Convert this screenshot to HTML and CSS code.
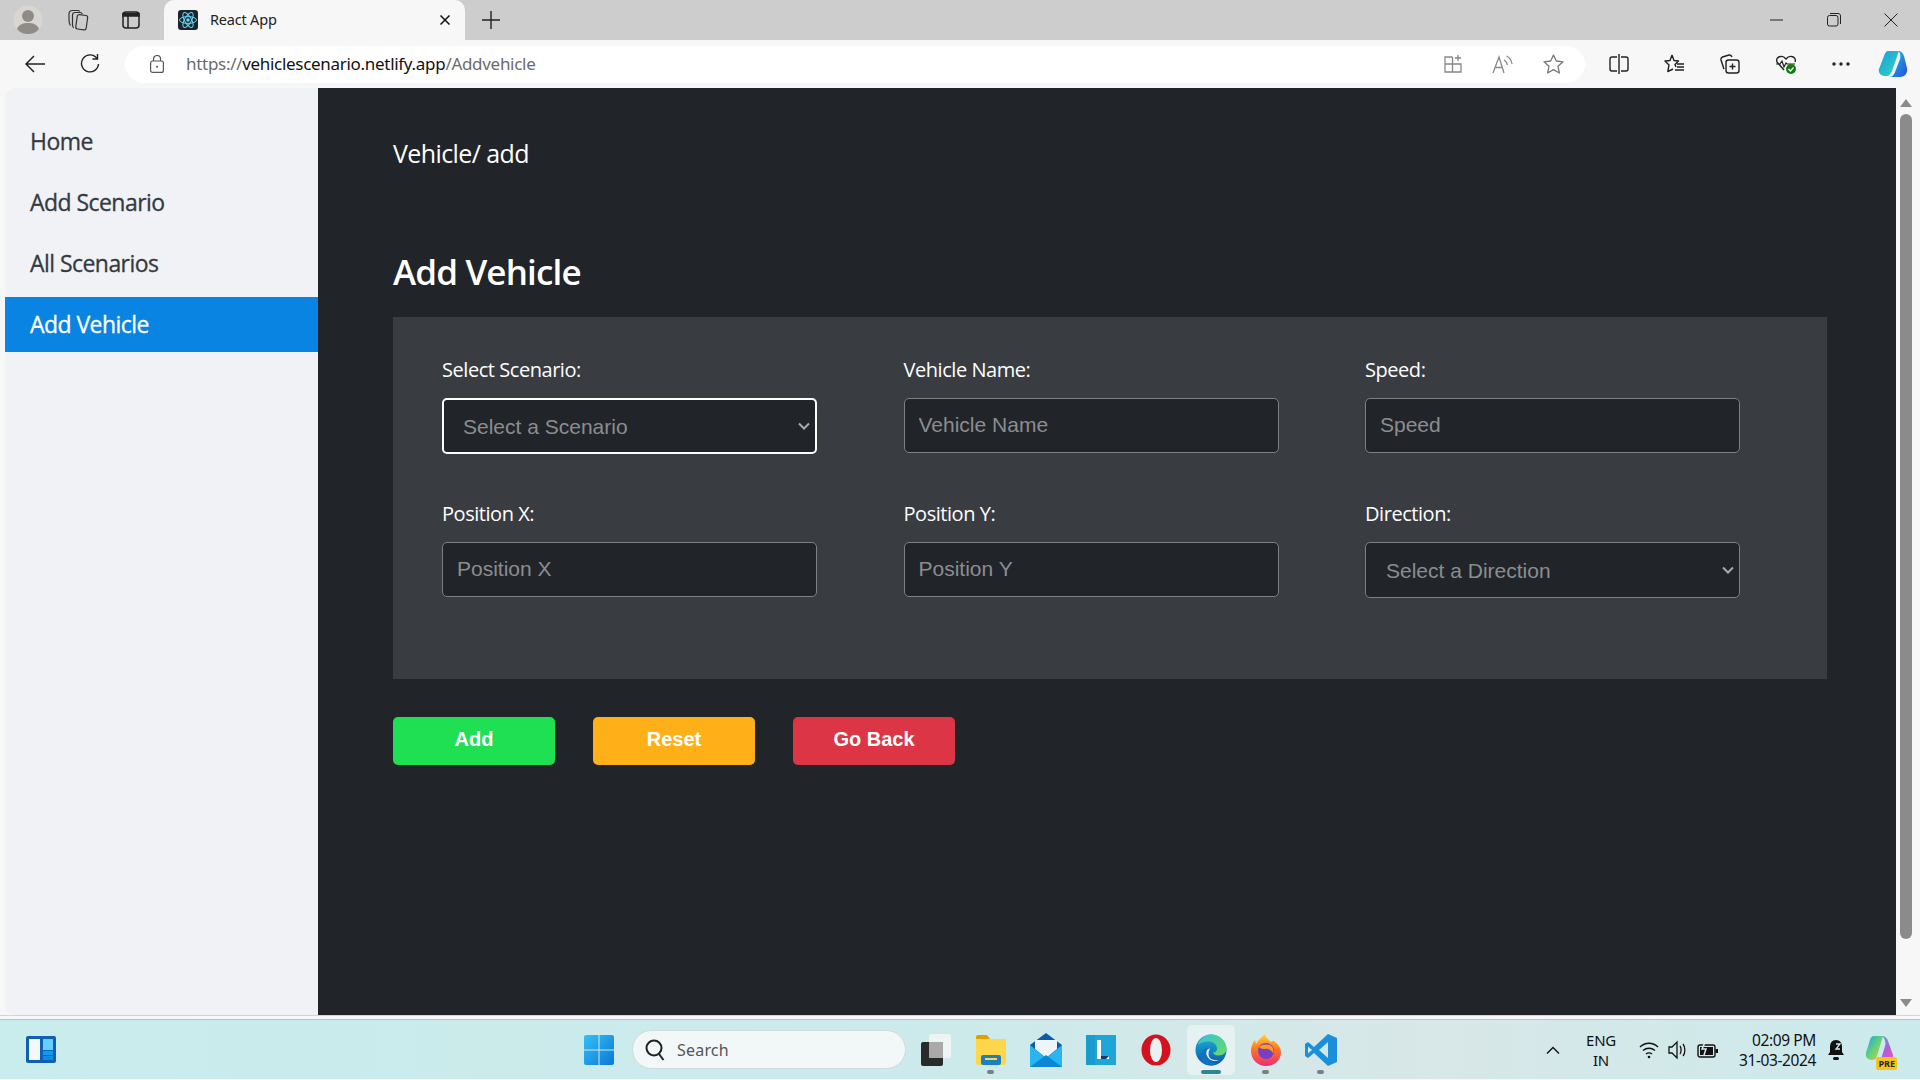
FILE: index.html
```html
<!DOCTYPE html>
<html>
  <head>
    <title>React App</title>
    <link rel="stylesheet" href="styles.css">
  </head>
  <body>
    <!-- browser tab strip -->
    <div class="tabstrip">
      <div class="avatar">
        <svg width="30" height="32" viewBox="0 0 30 32"><circle cx="15" cy="16" r="14.5" fill="#d8d6d2"/><circle cx="15" cy="12" r="6" fill="#8f8c87"/><path d="M4 25c2-5 6-6 11-6s9 1 11 6c-3 4-7 5-11 5s-8-1-11-5z" fill="#8f8c87"/></svg>
      </div>
      <div class="strip-icon">
        <svg width="22" height="22" viewBox="0 0 22 22" fill="none" stroke="#333" stroke-width="1.2"><rect x="9.500" y="6" width="10.500" height="14.500" rx="2" transform="rotate(8 14.700 13)"/><path d="M6.500 19C5 17 5.500 15 5.500 13V6c0-1.500 1-2.500 2.500-2.500h5c1.300 0 2 .7 2.300 1.700"/><path d="M3.500 16.500C1.800 14.500 2 12 2 10V5c0-2 1.500-3.500 3.500-3.500h5c1 0 1.800.3 2.300 1"/></svg>
      </div>
      <div class="strip-icon">
        <svg width="18" height="18" viewBox="0 0 18 18" fill="none" stroke="#222" stroke-width="1.5"><rect x="1" y="1" width="16" height="16" rx="3"/><path d="M1 2.5h16V5H1z" fill="#222"/><path d="M6 5v12"/></svg>
      </div>
      <div class="tab">
        <svg class="favicon" width="20" height="20" viewBox="0 0 20 20"><rect width="20" height="20" rx="3" fill="#20232a"/><g fill="none" stroke="#61dafb" stroke-width="1"><ellipse cx="10" cy="10" rx="8.5" ry="3.4"/><ellipse cx="10" cy="10" rx="8.5" ry="3.4" transform="rotate(60 10 10)"/><ellipse cx="10" cy="10" rx="8.5" ry="3.4" transform="rotate(120 10 10)"/></g><circle cx="10" cy="10" r="1.7" fill="#61dafb"/></svg>
        <span class="tab-title">React App</span>
        <svg class="tab-close" width="12" height="12" viewBox="0 0 12 12" stroke="#111" stroke-width="1.5"><path d="M1.5 1.5l9 9M10.5 1.5l-9 9"/></svg>
      </div>
      <svg class="new-tab" width="18" height="18" viewBox="0 0 18 18" stroke="#222" stroke-width="1.4"><path d="M9 0v18M0 9h18"/></svg>
      <div class="window-btns">
        <svg width="14" height="14" viewBox="0 0 14 14" stroke="#222" stroke-width="1"><path d="M0 7h13"/></svg>
        <svg width="14" height="14" viewBox="0 0 14 14" fill="none" stroke="#222" stroke-width="1"><rect x=".5" y="2.5" width="10.5" height="10.5" rx="2"/><path d="M3 .5h8c1.500 0 2.500 1 2.500 2.500v8"/></svg>
        <svg width="14" height="14" viewBox="0 0 14 14" stroke="#222" stroke-width="1"><path d="M.5.5l13 13M13.500.5l-13 13"/></svg>
      </div>
    </div>

    <!-- address bar -->
    <div class="toolbar">
      <svg class="nav-back" width="20" height="18" viewBox="0 0 20 18" fill="none" stroke="#222" stroke-width="1.5"><path d="M20 9H1M9 1L1 9l8 8"/></svg>
      <svg class="nav-reload" width="20" height="20" viewBox="0 0 20 20" fill="none" stroke="#222" stroke-width="1.4"><path d="M17 4.500A8.500 8.500 0 1 0 18.500 10"/><path d="M17.500 0v5h-5"/></svg>
      <div class="addressbar">
        <svg class="lock" width="14" height="18" viewBox="0 0 14 18" fill="none" stroke="#555" stroke-width="1.2"><rect x=".6" y="6" width="12.800" height="11.400" rx="2"/><path d="M3.500 6V4a3.500 3.500 0 0 1 7 0v2"/><circle cx="7" cy="11.700" r="1" fill="#555" stroke="none"/></svg>
        <span class="url"><span class="url-dim">https://</span>vehiclescenario.netlify.app<span class="url-dim">/Addvehicle</span></span>
        <div class="address-icons">
          <svg width="20" height="20" viewBox="0 0 20 20" fill="none" stroke="#888" stroke-width="1.3"><path d="M9.500 3H2v15h16v-8H2M9.500 3v15"/><path d="M15 1v6M12 4h6"/></svg>
          <svg width="22" height="20" viewBox="0 0 22 20" fill="none" stroke="#888" stroke-width="1.3"><path d="M1 19L7 3l5 16M3.200 13.500h7.600"/><path d="M12 6c2 1 3 2.500 3.300 5M14.500 2c3 1.500 5 4.500 5.500 8"/></svg>
          <svg width="21" height="20" viewBox="0 0 21 20" fill="none" stroke="#777" stroke-width="1.3" stroke-linejoin="round"><path d="M10.500 1l2.800 6 6.700.8-5 4.500 1.400 6.700-5.900-3.400L4.600 19l1.400-6.700-5-4.500L7.700 7z"/></svg>
        </div>
      </div>
      <div class="toolbar-icons">
        <svg width="20" height="20" viewBox="0 0 20 20" fill="none" stroke="#222" stroke-width="1.4"><path d="M8 3H3a2 2 0 0 0-2 2v10a2 2 0 0 0 2 2h5M12 3h5a2 2 0 0 1 2 2v10a2 2 0 0 1-2 2h-5M10 0v20"/></svg>
        <svg width="21" height="20" viewBox="0 0 21 20" fill="none" stroke="#222" stroke-width="1.4" stroke-linejoin="round"><path d="M8 1l2 5.500 4.500.5-3.500 3.500 1 2.500M8 1L6 6.500 1 7l4 4-1.200 6.500L9 15"/><path d="M13 10h7M13 13h7M11 16h9"/></svg>
        <svg width="20" height="20" viewBox="0 0 20 20" fill="none" stroke="#222" stroke-width="1.4"><rect x="6" y="6" width="13" height="13" rx="2.500"/><path d="M12.500 9.500v6M9.500 12.500h6"/><path d="M4 15L1 6c-.3-1.500.3-2.500 1.500-3L9 1c1.500-.3 2.500 .5 3 2"/></svg>
        <svg width="22" height="22" viewBox="0 0 22 22"><path d="M2 9c-2-5 5-8 9-3 4-5 11-2 9 3M2 9l7 8" fill="none" stroke="#222" stroke-width="1.4"/><path d="M1 11h4l2-3 2 6 2-4 1 1h8" fill="none" stroke="#222" stroke-width="1.2"/><circle cx="16" cy="16" r="5" fill="#107c10"/><path d="M13.500 16l2 2 3-3.500" fill="none" stroke="#fff" stroke-width="1.200"/></svg>
        <svg width="18" height="4" viewBox="0 0 18 4" fill="#222"><circle cx="2" cy="2" r="1.700"/><circle cx="9" cy="2" r="1.700"/><circle cx="16" cy="2" r="1.700"/></svg>
        <svg class="copilot" width="30" height="28" viewBox="0 0 30 28"><defs><linearGradient id="cpA" x1="0" y1="0" x2="1" y2="1"><stop offset="0" stop-color="#1b9de2"/><stop offset="1" stop-color="#2fd8b8"/></linearGradient><linearGradient id="cpB" x1="0" y1="0" x2="1" y2="1"><stop offset="0" stop-color="#16c8f0"/><stop offset="1" stop-color="#2b4fd8"/></linearGradient></defs><path d="M10 1h11l-7 20c-1 3-3 5-6 5H6c-4-1-6-4-5-7L6 6c1-3 2-5 4-5z" fill="url(#cpA)"/><path d="M20 1c3 0 5 2 6 5l3 12c1 5-2 9-7 9H11c3 0 5-2 6-5l5-13c1-3 0-7-2-8z" fill="url(#cpB)"/></svg>
      </div>
    </div>

    <div class="page">
      <nav class="sidebar">
        <a class="side-link" href="#">Home</a>
        <a class="side-link" href="#">Add Scenario</a>
        <a class="side-link" href="#">All Scenarios</a>
        <a class="side-link active" href="#">Add Vehicle</a>
      </nav>

      <main class="content">
        <p class="crumb">Vehicle/ add</p>
        <h1>Add Vehicle</h1>
        <form class="panel">
          <div class="field">
            <label for="scenario">Select Scenario:</label>
            <select id="scenario" class="picker focused"><option>Select a Scenario</option></select>
          </div>
          <div class="field">
            <label for="vname">Vehicle Name:</label>
            <input id="vname" type="text" placeholder="Vehicle Name">
          </div>
          <div class="field">
            <label for="speed">Speed:</label>
            <input id="speed" type="text" placeholder="Speed">
          </div>
          <div class="field">
            <label for="posx">Position X:</label>
            <input id="posx" type="text" placeholder="Position X">
          </div>
          <div class="field">
            <label for="posy">Position Y:</label>
            <input id="posy" type="text" placeholder="Position Y">
          </div>
          <div class="field">
            <label for="direction">Direction:</label>
            <select id="direction" class="picker"><option>Select a Direction</option></select>
          </div>
        </form>
        <div class="actions">
          <button class="btn btn-add" type="button">Add</button>
          <button class="btn btn-reset" type="button">Reset</button>
          <button class="btn btn-back" type="button">Go Back</button>
        </div>
      </main>

      <div class="scrollbar">
        <svg width="12" height="8" viewBox="0 0 12 8" fill="#8b8b8b"><path d="M6 0l6 8H0z"/></svg>
        <div class="thumb"></div>
        <svg width="12" height="8" viewBox="0 0 12 8" fill="#8b8b8b"><path d="M6 8L0 0h12z"/></svg>
      </div>
    </div>

    <!-- windows taskbar -->
    <footer class="taskbar">
      <svg class="widgets" width="30" height="27" viewBox="0 0 30 27"><rect width="30" height="27" rx="2" fill="#0f5fb5"/><rect x="3" y="3" width="11" height="21" fill="#f4f8fb"/><rect x="17" y="3" width="10" height="11" fill="#63cffb"/><rect x="17" y="15" width="10" height="4" fill="#0f9af0"/><rect x="17" y="20" width="10" height="4" fill="#0f8be6"/></svg>

      <div class="task-center">
        <svg class="winlogo" width="30" height="30" viewBox="0 0 30 30"><defs><linearGradient id="winG" x1="0" y1="0" x2="1" y2="1"><stop offset="0" stop-color="#35c0f5"/><stop offset="1" stop-color="#0a78d8"/></linearGradient></defs><path d="M2 0h12.500v14.500H0V2a2 2 0 0 1 2-2zM15.500 0H28a2 2 0 0 1 2 2v12.500H15.500zM0 15.500h14.500V30H2a2 2 0 0 1-2-2zM15.500 15.500H30V28a2 2 0 0 1-2 2H15.500z" fill="url(#winG)"/></svg>
        <div class="searchbox">
          <svg width="20" height="22" viewBox="0 0 20 22" fill="none" stroke="#222" stroke-width="2"><circle cx="9" cy="9" r="7.500"/><path d="M14 15l4.500 6"/></svg>
          <span>Search</span>
        </div>
        <div class="task-icon">
          <svg width="30" height="32" viewBox="0 0 30 32"><rect x="0" y="8" width="22" height="24" rx="2" fill="#2a2a2a"/><rect x="8" y="0" width="22" height="24" rx="2" fill="#f2f5f5" opacity=".9"/><rect x="8" y="8" width="14" height="16" fill="#a9a9a9"/></svg>
        </div>
        <div class="task-icon running">
          <svg width="32" height="32" viewBox="0 0 32 32"><path d="M1 3a2 2 0 0 1 2-2h9l3 4H1z" fill="#e0a100"/><path d="M1 5h30v24a2 2 0 0 1-2 2H3a2 2 0 0 1-2-2z" fill="#ffd54a"/><rect x="6" y="21" width="20" height="10" rx="2" fill="#1b7fc4"/><rect x="10" y="24" width="12" height="2" fill="#ffd54a"/></svg>
        </div>
        <div class="task-icon">
          <svg width="32" height="34" viewBox="0 0 32 34"><path d="M16 0l16 12v22H0V12z" fill="#0a5ea8"/><path d="M5 7h22v9l-11 9-11-9z" fill="#eef4f8"/><path d="M0 12l16 13 16-13v22H0z" fill="#29b5ef"/><path d="M0 34l16-12 16 12z" fill="#0d86d6"/></svg>
        </div>
        <div class="task-icon">
          <svg width="30" height="30" viewBox="0 0 30 30"><rect width="30" height="30" fill="#1fa6d8"/><path d="M0 0h9v30H0z" fill="#1690c0" opacity=".5"/><path d="M11 5h4v16h8v3H11z" fill="#fff"/><path d="M15 21h8l-3 3h-5z" fill="#0d3d78"/></svg>
        </div>
        <div class="task-icon">
          <svg width="30" height="32" viewBox="0 0 30 32"><ellipse cx="15" cy="16" rx="14.500" ry="15.500" fill="#d3111f"/><ellipse cx="15" cy="16" rx="6" ry="12" fill="#e9f1f1"/></svg>
        </div>
        <div class="task-icon current">
          <svg width="32" height="32" viewBox="0 0 32 32"><defs><linearGradient id="edgeA" x1="0" y1="0" x2="0" y2="1"><stop offset="0" stop-color="#1fb2d8"/><stop offset="1" stop-color="#0b57a8"/></linearGradient><linearGradient id="edgeB" x1="0" y1="0" x2="1" y2="1"><stop offset="0" stop-color="#35c1e0"/><stop offset="1" stop-color="#6cdc5c"/></linearGradient></defs><circle cx="16" cy="16" r="15.500" fill="url(#edgeA)"/><path d="M3 10C6 3 12 .5 16 .5c9 0 15.500 7 15.500 14 0 4-3 7-8 7-3 0-5-1-5.500-3 3 0 4-2 4-4 0-4-4-7-8.500-7-5 0-8 2-10.500 3z" fill="url(#edgeB)"/><path d="M12 20c0 5 4 9 10 9-2 2-4 2.500-6 2.500-5 0-9-3-10-7-1-5 2-10 7-11-1 2-1 4-1 6.500z" fill="#0f73c4"/><path d="M15 14.500c-3 .5-4 3-3.500 6 1 4 5 7 10 6.500l3-1c-6 1-11-1-11-6 0-2 .5-4 1.500-5.500z" fill="#e9f4f4"/></svg>
        </div>
        <div class="task-icon running">
          <svg width="30" height="32" viewBox="0 0 30 32"><defs><linearGradient id="foxA" x1="0" y1="0" x2="0" y2="1"><stop offset="0" stop-color="#ffd53a"/><stop offset=".45" stop-color="#ff7a1f"/><stop offset="1" stop-color="#ee2a7b"/></linearGradient></defs><path d="M15 32C6 32 0 25 0 17 0 12 2 8 4 6l1 4c2-4 5-6 9-10 0 3 3 5 6 8 1-1 2-1 3-1 4 3 7 7 7 11 0 8-6 14-15 14z" fill="url(#foxA)"/><circle cx="15" cy="17" r="8" fill="#7b3fc4"/><path d="M8 13c3-3 7-3 11-2 3 2 4 5 3 8-2-3-5-5-8-4-2 0-4 0-6-2z" fill="#ff9a1f"/></svg>
        </div>
        <div class="task-icon running">
          <svg width="32" height="32" viewBox="0 0 32 32"><path d="M23 0l9 4v24l-9 4L9 19l-6 5-3-2V10l3-2 6 5z" fill="#1b8fdc"/><path d="M23 8l-9 8 9 8z" fill="#cfe9e9"/><path d="M3 12.500L7 16l-4 3.500z" fill="#cfe9e9"/></svg>
        </div>
      </div>

      <div class="tray">
        <svg class="tray-up" width="14" height="8" viewBox="0 0 14 8" fill="none" stroke="#111" stroke-width="1.4"><path d="M1 7.500l6-6 6 6"/></svg>
        <div class="lang">ENG<br>IN</div>
        <div class="tray-icons">
          <svg width="20" height="18" viewBox="0 0 20 18" fill="none" stroke="#111" stroke-width="1.4"><path d="M1 6c5-5 13-5 18 0M4 9.500c3.500-3 8.500-3 12 0M7 13c2-1.500 4-1.500 6 0"/><circle cx="10" cy="16" r="1.300" fill="#111" stroke="none"/></svg>
          <svg width="20" height="20" viewBox="0 0 20 20" fill="none" stroke="#111" stroke-width="1.3"><path d="M1 7h3l5-5v16l-5-5H1z"/><path d="M12 6c1.500 2 1.500 6 0 8M15 4c2.500 3 2.500 9 0 12"/></svg>
          <svg width="22" height="20" viewBox="0 0 22 20"><rect x="1" y="5" width="17" height="12" rx="2" fill="none" stroke="#111" stroke-width="1.400"/><rect x="3" y="7" width="13" height="8" fill="#111"/><rect x="18.500" y="9" width="2.500" height="4" fill="#111"/><path d="M9 0L5 9h4l-2 6" fill="none" stroke="#dbeaea" stroke-width="1.500"/></svg>
        </div>
        <div class="clock">02:09 PM<br>31-03-2024</div>
        <svg class="bell" width="18" height="24" viewBox="0 0 18 24"><path d="M9 2c4 0 6 3 6 7v5l2 3H1l2-3V9c0-4 2-7 6-7z" fill="#111"/><rect x="6" y="19" width="6" height="3" rx="1.500" fill="#111"/><path d="M9 6h4l-4 5h4" fill="none" stroke="#dbeaea" stroke-width="1.300"/></svg>
        <div class="copilot-pre">
          <svg width="30" height="30" viewBox="0 0 30 30"><defs><linearGradient id="cpC" x1="0" y1="0" x2="1" y2="1"><stop offset="0" stop-color="#1c9fe8"/><stop offset=".5" stop-color="#62d27a"/><stop offset="1" stop-color="#f3c52e"/></linearGradient><linearGradient id="cpD" x1="0" y1="0" x2="1" y2="1"><stop offset="0" stop-color="#2ac4f0"/><stop offset=".6" stop-color="#b55ad8"/><stop offset="1" stop-color="#ef5fa7"/></linearGradient></defs><path d="M9 1h9l-6 20c-1 3-3 4-5 4-4 0-7-3-6-7L5 5c1-3 2-4 4-4z" fill="url(#cpC)"/><path d="M17 1c3 0 5 2 6 5l5 14c1 3-1 6-5 6H11c3 0 5-2 6-5l3-10c1-3 0-8-3-10z" fill="url(#cpD)"/></svg>
          <span class="pre-badge">PRE</span>
        </div>
      </div>
    </footer>
  </body>
</html>
```

FILE: styles.css
```css
* {
  box-sizing: border-box;
}

html, body {
  margin: 0;
  height: 100%;
  overflow: hidden;
}

body {
  display: flex;
  flex-direction: column;
  height: 1080px;
  background-color: #f7f7f7;
  font-family: "Open Sans", "Noto Sans", sans-serif;
}

/* Tab strip */
.tabstrip {
  display: flex;
  align-items: center;
  height: 40px;
  background-color: #cdcdcd;
  padding-left: 13px;
}

.avatar {
  display: flex;
  width: 30px;
  margin-right: 24px;
}

.strip-icon {
  display: flex;
  justify-content: center;
  width: 22px;
  margin-right: 31px;
}

.tab {
  display: flex;
  align-items: center;
  align-self: flex-end;
  width: 301px;
  height: 40px;
  margin-left: -9px;
  padding: 0 14px 0 14px;
  background-color: #f7f7f7;
  border-radius: 10px 10px 0 0;
}

.tab-title {
  flex: 1;
  margin: -2px 0 0 12px;
  font-family: "Noto Sans", sans-serif;
  font-size: 14.5px;
  letter-spacing: -0.2px;
  color: #222;
}

.new-tab {
  margin-left: 17px;
}

.window-btns {
  display: flex;
  gap: 43px;
  margin-left: auto;
  padding-right: 22px;
}

/* Address bar */
.toolbar {
  display: flex;
  align-items: center;
  height: 48px;
  padding-left: 25px;
}

.nav-back {
  margin-right: 35px;
}

.addressbar {
  display: flex;
  align-items: center;
  width: 1460px;
  height: 37px;
  margin-left: 25px;
  padding-left: 25px;
  background-color: #fff;
  border-radius: 19px;
}

.url {
  margin: -2px 0 0 22px;
  font-family: "Noto Sans", sans-serif;
  font-size: 17px;
  letter-spacing: -0.3px;
  color: #111;
}

.url-dim {
  color: #6b6b6b;
}

.address-icons {
  display: flex;
  align-items: center;
  gap: 29px;
  margin-left: auto;
  padding-right: 21px;
}

.toolbar-icons {
  display: flex;
  align-items: center;
  gap: 35px;
  margin-left: 24px;
}

.copilot {
  margin-left: -7px;
}

/* Page */
.page {
  display: flex;
  height: 928px;
  padding: 0 5px 0 5px;
  border-bottom: 1px solid #d4d4d4;
}

.sidebar {
  display: flex;
  flex-direction: column;
  width: 313px;
  padding-top: 26px;
  background-color: #f1f2f6;
  border-radius: 10px 0 0 10px;
}

.side-link {
  display: flex;
  align-items: center;
  height: 55px;
  margin-bottom: 6px;
  padding: 0 0 1px 25px;
  font-size: 23px;
  font-weight: 500;
  letter-spacing: -0.55px;
  -webkit-text-stroke: 0.3px;
  color: #343a40;
  text-decoration: none;
}

.side-link.active {
  background-color: #0984e3;
  color: #fff;
}

.content {
  flex: 1;
  padding: 0 69px 0 75px;
  background-color: #212529;
  color: #fff;
}

.crumb {
  margin: 46px 0 0;
  font-size: 25px;
  line-height: 38px;
  letter-spacing: -0.6px;
}

h1 {
  margin: 76px 0 0;
  font-size: 35px;
  font-weight: 600;
  line-height: 48px;
  letter-spacing: -0.85px;
}

.panel {
  display: grid;
  grid-template-columns: repeat(3, 375px);
  align-content: start;
  column-gap: 86.5px;
  row-gap: 47px;
  height: 362px;
  margin-top: 21px;
  padding: 40px 0 0 49px;
  background-color: #393c41;
}

.field {
  display: flex;
  flex-direction: column;
  align-items: stretch;
}

label {
  height: 26px;
  margin-bottom: 15px;
  font-size: 20px;
  line-height: 26px;
  letter-spacing: -0.45px;
}

input[type="text"], .picker {
  width: 375px;
  background-color: #212529;
  border: 1px solid #7d8084;
  border-radius: 5px;
  font-family: "Liberation Sans", Arial, sans-serif;
  font-size: 21px;
  color: #8b8d8f;
}

input[type="text"] {
  height: 55px;
  padding: 0 14px 2px;
}

input::placeholder {
  color: #8b8d8f;
  opacity: 1;
}

.picker {
  height: 56px;
  padding: 0 0 0 20px;
  appearance: none;
  background-image: url("data:image/svg+xml,%3Csvg xmlns='http://www.w3.org/2000/svg' width='12' height='8'%3E%3Cpath d='M1 1.500l5 5 5-5' fill='none' stroke='%23aaa' stroke-width='2'/%3E%3C/svg%3E");
  background-repeat: no-repeat;
  background-position: right 5px center;
}

.picker.focused {
  border: 2px solid #fff;
  padding-left: 19px;
}

.actions {
  display: flex;
  gap: 38px;
  margin-top: 38px;
}

.btn {
  width: 162px;
  height: 48px;
  padding: 0 0 3px;
  border: none;
  border-radius: 5px;
  font-family: "Liberation Sans", Arial, sans-serif;
  font-size: 20px;
  font-weight: bold;
  color: #fff;
}

.btn-add {
  background-color: #1fdf52;
}

.btn-reset {
  background-color: #ffaf18;
}

.btn-back {
  background-color: #dc3545;
}

.scrollbar {
  display: flex;
  flex-direction: column;
  align-items: center;
  width: 19px;
  padding: 11px 0 8px;
  background-color: #f7f7f7;
  border-radius: 0 8px 8px 0;
}

.thumb {
  width: 12px;
  height: 825px;
  margin: 7px 0 auto;
  background-color: #8b8b8b;
  border-radius: 6px;
}

/* Taskbar */
.taskbar {
  position: relative;
  display: flex;
  align-items: center;
  height: 60px;
  margin-top: 3px;
  padding-left: 26px;
  background: linear-gradient(90deg, #c9ecec 0%, #cdeaeb 50%, #d8e7e7 75%, #cbeaec 100%);
  border-top: 1px solid #b9c6c6;
}

.task-center {
  display: flex;
  align-items: center;
  margin-left: 528px;
}

.winlogo {
  margin-right: 18px;
}

.searchbox {
  display: flex;
  align-items: center;
  gap: 12px;
  width: 274px;
  height: 39px;
  padding-left: 12px;
  background-color: #f2f7f7;
  border: 1px solid #cfdcdc;
  border-radius: 20px;
  font-family: "Noto Sans", sans-serif;
  font-size: 16px;
  letter-spacing: 0.2px;
  color: #555;
}

.task-icon {
  position: relative;
  display: flex;
  align-items: center;
  justify-content: center;
  width: 55px;
  height: 50px;
}

.searchbox + .task-icon {
  margin-left: 2px;
}

.task-icon.current {
  width: 48px;
  margin: 0 3.500px;
  background-color: #e6f1f1;
  border-radius: 5px;
}

.task-icon.running::after, .task-icon.current::after {
  content: "";
  position: absolute;
  left: 50%;
  bottom: 1px;
  width: 7px;
  height: 4px;
  margin-left: -3.500px;
  background-color: #7a7f80;
  border-radius: 2px;
}

.task-icon.current::after {
  width: 20px;
  margin-left: -10px;
  background-color: #2a8798;
}

.tray {
  display: flex;
  align-items: center;
  margin-left: 198px;
  font-family: "Noto Sans", sans-serif;
  font-size: 15px;
  color: #111;
}

.lang {
  width: 46px;
  margin-left: 18px;
  line-height: 20px;
  text-align: center;
  letter-spacing: -0.3px;
}

.tray-icons {
  display: flex;
  align-items: center;
  gap: 9px;
  margin-left: 15px;
}

.clock {
  width: 92px;
  margin-left: 5px;
  line-height: 20px;
  text-align: right;
  font-size: 15.500px;
  letter-spacing: -0.4px;
}

.bell {
  margin-left: 11px;
}

.copilot-pre {
  position: relative;
  display: flex;
  margin-left: 20px;
}

.pre-badge {
  position: absolute;
  right: -2px;
  bottom: -5px;
  padding: 0 2px;
  background-color: #f5c518;
  border-radius: 2px;
  font-size: 9px;
  font-weight: 700;
  line-height: 13px;
  color: #222;
}
```
